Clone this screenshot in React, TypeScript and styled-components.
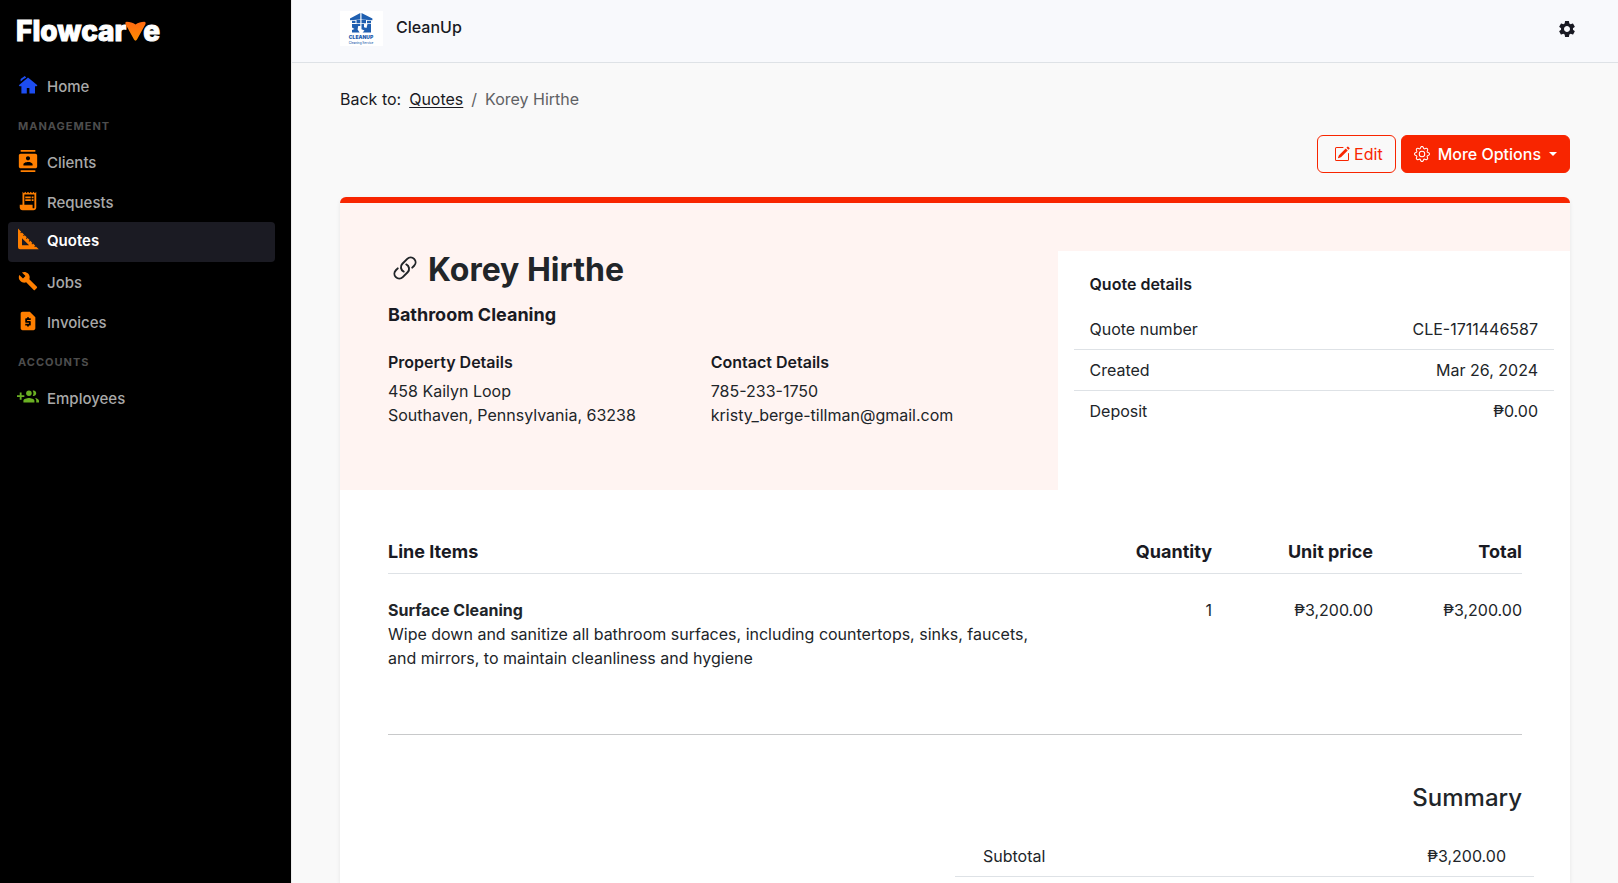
import React from 'react';
import styled, { createGlobalStyle } from 'styled-components';
import { MdContacts, MdReceiptLong, MdBuild, MdRequestPage, MdSettings } from 'react-icons/md';
import { BsGear, BsPencilSquare } from 'react-icons/bs';

const red = '#f82500';
const ink = '#212529';
const heading = '#191a23';
const line = '#dee2e6';

const GlobalStyle = createGlobalStyle`
  *, *::before, *::after { box-sizing: border-box; }
  body {
    margin: 0;
    background: #f9f9f9;
    color: ${ink};
    font-family: Inter, "Liberation Sans", sans-serif;
    font-size: 16px;
    line-height: 24px;
  }
  h1, h2, h3, p, ul, dl, dd { margin: 0; padding: 0; }
  ul { list-style: none; }
  svg { display: block; flex: none; }
`;

const Page = styled.div`
  display: flex;
  min-height: 100vh;
`;

const Sidebar = styled.aside`
  flex: none;
  width: 292px;
  padding: 16px 16px 16px 8px;
  background: #000;
  border-right: 1px solid #ececec;
`;

const Brand = styled.a`
  display: flex;
  align-items: baseline;
  height: 50px;
  padding-left: 8px;
  color: #fff;
  font-size: 28px;
  font-weight: 800;
  line-height: 30px;
  text-decoration: none;
  -webkit-text-stroke: 1px #fff;
`;

const BrandMark = styled.svg`
  width: 21px;
  height: 20px;
  margin: 0 -3px 0 -1px;
`;

const NavLink = styled.a<{ $active?: boolean }>`
  display: flex;
  align-items: center;
  gap: 8px;
  height: 40px;
  padding: ${(p) => (p.$active ? '0 9px 2px' : '2px 9px 0')};
  border-radius: 4px;
  background: ${(p) => (p.$active ? '#1b1b23' : 'transparent')};
  color: ${(p) => (p.$active ? '#fff' : '#a9a9a9')};
  font-weight: ${(p) => (p.$active ? 600 : 500)};
  font-size: 15px;
  text-decoration: none;
`;

const NavIcon = styled.span<{ $color: string }>`
  display: flex;
  align-items: center;
  justify-content: center;
  width: 22px;
  margin-bottom: 4px;
  color: ${(p) => p.$color};
`;

const NavSection = styled.h2`
  height: 36px;
  padding: 0 10px;
  color: #4d4d4d;
  font-size: 11px;
  font-weight: 700;
  letter-spacing: 1px;
  line-height: 40px;
  text-transform: uppercase;
`;

const Main = styled.div`
  display: flex;
  flex: 1;
  flex-direction: column;
  min-width: 0;
`;

const TopBar = styled.header`
  display: flex;
  align-items: flex-start;
  justify-content: space-between;
  height: 63px;
  padding: 11px 41px 0 48px;
  background: #f8f9fc;
  border-bottom: 1px solid ${line};
`;

const Company = styled.a`
  display: flex;
  align-items: flex-start;
  gap: 13px;
  color: ${heading};
  font-weight: 500;
  line-height: 32px;
  text-decoration: none;
`;

const IconButton = styled.button`
  margin-top: 8px;
  padding: 0;
  border: 0;
  background: none;
  color: ${heading};
`;

const Content = styled.main`
  display: flex;
  flex: 1;
  flex-direction: column;
  gap: 24px;
  padding: 24px 48px 0;
`;

const Breadcrumb = styled.nav`
  display: flex;
  gap: 8px;
  color: #5f6164;
`;

const Lead = styled.span`
  color: ${heading};
`;

const CrumbLink = styled.a`
  color: ${heading};
  text-underline-offset: 2px;
`;

const Actions = styled.div`
  display: flex;
  justify-content: flex-end;
  gap: 5px;
`;

const ActionButton = styled.button<{ $solid?: boolean }>`
  display: flex;
  align-items: center;
  gap: ${(p) => (p.$solid ? 8 : 4)}px;
  height: 38px;
  padding: 0 12px 0 ${(p) => (p.$solid ? 12 : 16)}px;
  border: 1px solid ${red};
  border-radius: 6px;
  background: ${(p) => (p.$solid ? red : 'transparent')};
  color: ${(p) => (p.$solid ? '#fff' : red)};
  font: ${(p) => (p.$solid ? 500 : 400)} 16px/24px Inter, "Liberation Sans", sans-serif;
`;

const Caret = styled.span`
  border: 4px solid transparent;
  border-top-color: currentColor;
  border-bottom: 0;
`;

const Card = styled.article`
  flex: 1;
  overflow: hidden;
  border-top: 6px solid ${red};
  border-radius: 6px 6px 0 0;
  background: #fff;
  box-shadow: 0 2px 4px rgba(0, 0, 0, 0.08);
`;

const Overview = styled.section`
  display: grid;
  grid-template-columns: 7fr 5fr;
  min-height: 287px;
  padding-top: 48px;
  background: #fff4f2;
`;

const Customer = styled.div`
  padding: 0 24px 0 48px;
`;

const Name = styled.h1`
  display: flex;
  align-items: center;
  gap: 10px;
  margin-bottom: 14px;
  padding-left: 4px;
  font-size: 32px;
  font-weight: 700;
  line-height: 38px;
`;

const LinkMark = styled.svg`
  width: 26px;
  height: 26px;
  margin-bottom: 4px;
`;

const Subject = styled.h2`
  margin-bottom: 22px;
  color: ${heading};
  font-size: 18px;
  font-weight: 700;
  line-height: 24px;
`;

const Columns = styled.div`
  display: grid;
  grid-template-columns: 1fr 1fr;
`;

const Label = styled.h3`
  margin-bottom: 4px;
  color: ${heading};
  font-size: 16px;
  font-weight: 600;
  line-height: 26px;
`;

const Details = styled.div`
  padding: 20px 16px;
  background: #fff;
`;

const DetailsTitle = styled(Label)`
  margin-bottom: 12px;
  padding: 0 16px;
`;

const Row = styled.div<{ $inset: number; $ruled?: boolean }>`
  display: flex;
  justify-content: space-between;
  padding: 8px ${(p) => p.$inset}px;
  border-bottom: ${(p) => (p.$ruled ? `1px solid ${line}` : '0')};
`;

const Items = styled.section`
  padding: 48px 48px 0;
`;

const Table = styled.table`
  width: 100%;
  border-collapse: collapse;
  table-layout: fixed;
`;

const HeadCell = styled.th<{ $width?: number }>`
  width: ${(p) => (p.$width ? `${p.$width}px` : 'auto')};
  padding: 0 0 8px;
  border-bottom: 1px solid ${line};
  color: ${heading};
  font-size: 18px;
  font-weight: 700;
  line-height: 27px;
  text-align: ${(p) => (p.$width ? 'right' : 'left')};
`;

const Cell = styled.td<{ $number?: boolean }>`
  padding: 24px 0 64px;
  text-align: ${(p) => (p.$number ? 'right' : 'left')};
  vertical-align: top;
`;

const Divider = styled.hr`
  height: 1px;
  margin: 0;
  border: 0;
  background: #c8c9ca;
`;

const Summary = styled.section`
  padding: 48px 36px 0;
`;

const SummaryTitle = styled.h2`
  margin-bottom: 24px;
  padding-right: 12px;
  font-size: 24px;
  font-weight: 500;
  line-height: 29px;
  text-align: right;
`;

const Totals = styled.dl`
  width: 50%;
  margin-left: auto;
`;

function HomeIcon() {
  return (
    <svg width="20" height="20" viewBox="0 0 20 20" fill="currentColor" aria-hidden="true">
      <path d="M10 2.600 19.400 10.200 18.600 11.200H17V18.600H11.400V13H8.800V18.600H3.400V11.200H1.600L.8 10.200Z" />
      <path d="M2.600 6.200V4L6.800 1 8.200 2.400 5 4.400 2.900 6.600Z" />
    </svg>
  );
}

function SetSquareIcon() {
  return (
    <svg width="22" height="22" viewBox="0 0 22 22" fill="currentColor" aria-hidden="true">
      <path
        fillRule="evenodd"
        d="M1 .5 4.2 3.7 3.3 4.6 4 5.3 4.9 4.4 7 6.5 6.1 7.4 6.8 8.1 7.7 7.2 9.8 9.3 8.9 10.2 9.6 10.9 10.5 10 12.6 12.1 11.7 13 12.4 13.7 13.3 12.8 15.4 14.9 14.5 15.8 15.2 16.5 16.1 15.6 18.2 17.7 17.3 18.6 18 19.3 18.9 18.4 21.8 21.3H3A2 2 0 0 1 1 19.3ZM5 10.2V17.3H12.1Z"
      />
    </svg>
  );
}

function AddGroupIcon() {
  return (
    <svg width="22" height="22" viewBox="0 0 24 24" fill="currentColor" aria-hidden="true">
      <path d="M8 10H5V7H3v3H0v2h3v3h2v-3h3v-2z" />
      <path d="M18 11c1.66 0 2.99-1.34 2.99-3S19.66 5 18 5c-.32 0-.63.05-.91.14.57.81.9 1.79.9 2.86s-.34 2.04-.9 2.86c.28.09.59.14.91.14z" />
      <circle cx="13" cy="8" r="3" />
      <path d="M19.62 13.16c.83.73 1.38 1.66 1.38 2.84v2h3v-2c0-1.54-2.37-2.49-4.38-2.84zM13 13c-2 0-6 1-6 3v2h12v-2c0-2-4-3-6-3z" />
    </svg>
  );
}

function CompanyLogo() {
  return (
    <svg width="43" height="35" viewBox="0 0 43 35" role="img" aria-label="CleanUp Cleaning Service">
      <rect width="43" height="35" fill="#fff" />
      <g fill="#1f5fb0">
        <path d="M20.3 2V8.4L10 9.3V7.6ZM21.500 2 32.4 7.6V9.3L21.500 8.4Z" />
        <path d="M12 9.8H15.5V12H12ZM16.500 9H20.3V12.2H16.500ZM21.500 9H26V12.2H21.500ZM27 9.8H31V12.2H27Z" />
        <path d="M12 13H20.3V15H18.2L17.600 18.500 19.600 21.5H12V19L14.500 18 12 16.500ZM21.500 13H24V16.200L26.500 17 27.500 13H31V21.6H22.600L24.500 19.4 21.500 18.2Z" />
      </g>
      <text x="21" y="28" textAnchor="middle" fontFamily="Inter, sans-serif" fontWeight="900" fontSize="5" fill="#1f5fb0">
        CLEANUP
      </text>
      <text x="21" y="33" textAnchor="middle" fontFamily="Inter, sans-serif" fontSize="3" fill="#1f5fb0">
        Cleaning Service
      </text>
    </svg>
  );
}

const orange = '#ff7f00';

export default function App() {
  return (
    <>
      <GlobalStyle />
      <Page>
        <Sidebar>
          <Brand href="#">
            <span>Flowcar</span>
            <BrandMark viewBox="0 0 21 20" aria-label="v">
              <defs>
                <linearGradient id="mark" x1="0" y1="0" x2="0" y2="1">
                  <stop offset="0" stopColor="#ff6a13" />
                  <stop offset="1" stopColor="#ff8c00" />
                </linearGradient>
              </defs>
              <path
                fill="url(#mark)"
                d="M1.8.8C4.8.8 8 2 10.5 3.4 13 2 16.2.8 19.2.8 20.6.8 21 2 20.3 3.5L12 18.6C11.2 20 9.8 20 9 18.6L.7 3.5C0 2 .4.8 1.8.8Z"
              />
            </BrandMark>
            <span>e</span>
          </Brand>
          <nav>
            <NavLink href="#">
              <NavIcon $color="#1d4df0"><HomeIcon /></NavIcon>Home
            </NavLink>
            <NavSection>Management</NavSection>
            <NavLink href="#">
              <NavIcon $color={orange}><MdContacts size={22} /></NavIcon>Clients
            </NavLink>
            <NavLink href="#">
              <NavIcon $color={orange}><MdReceiptLong size={22} /></NavIcon>Requests
            </NavLink>
            <NavLink href="#" $active aria-current="page">
              <NavIcon $color={orange}><SetSquareIcon /></NavIcon>Quotes
            </NavLink>
            <NavLink href="#">
              <NavIcon $color={orange}><MdBuild size={20} /></NavIcon>Jobs
            </NavLink>
            <NavLink href="#">
              <NavIcon $color={orange}><MdRequestPage size={22} /></NavIcon>Invoices
            </NavLink>
            <NavSection>Accounts</NavSection>
            <NavLink href="#">
              <NavIcon $color="#6ab023"><AddGroupIcon /></NavIcon>Employees
            </NavLink>
          </nav>
        </Sidebar>
        <Main>
          <TopBar>
            <Company href="#"><CompanyLogo />CleanUp</Company>
            <IconButton type="button" aria-label="Settings"><MdSettings size={20} /></IconButton>
          </TopBar>
          <Content>
            <Breadcrumb aria-label="Breadcrumb">
              <Lead>Back to:</Lead>
              <CrumbLink href="#">Quotes</CrumbLink>
              <span>/</span>
              <span>Korey Hirthe</span>
            </Breadcrumb>
            <Actions>
              <ActionButton type="button"><BsPencilSquare size={16} />Edit</ActionButton>
              <ActionButton type="button" $solid><BsGear size={16} />More Options<Caret /></ActionButton>
            </Actions>
            <Card>
              <Overview>
                <Customer>
                  <Name>
                    <LinkMark viewBox="0 0 24 24" fill="none" stroke="currentColor" strokeWidth="1.8" strokeLinecap="round" strokeLinejoin="round" aria-hidden="true">
                      <path d="M13.19 8.688a4.5 4.5 0 0 1 1.242 7.244l-4.5 4.5a4.5 4.5 0 0 1-6.364-6.364l1.757-1.757m13.35-.622 1.757-1.757a4.5 4.5 0 0 0-6.364-6.364l-4.5 4.5a4.5 4.5 0 0 0 1.242 7.244" />
                    </LinkMark>
                    Korey Hirthe
                  </Name>
                  <Subject>Bathroom Cleaning</Subject>
                  <Columns>
                    <div>
                      <Label>Property Details</Label>
                      <p>458 Kailyn Loop</p>
                      <p>Southaven, Pennsylvania, 63238</p>
                    </div>
                    <div>
                      <Label>Contact Details</Label>
                      <p>785-233-1750</p>
                      <p>kristy_berge-tillman@gmail.com</p>
                    </div>
                  </Columns>
                </Customer>
                <Details>
                  <DetailsTitle>Quote details</DetailsTitle>
                  <dl>
                    <Row $inset={16} $ruled><dt>Quote number</dt><dd>CLE-1711446587</dd></Row>
                    <Row $inset={16} $ruled><dt>Created</dt><dd>Mar 26, 2024</dd></Row>
                    <Row $inset={16}><dt>Deposit</dt><dd>₱0.00</dd></Row>
                  </dl>
                </Details>
              </Overview>
              <Items>
                <Table>
                  <thead>
                    <tr>
                      <HeadCell>Line Items</HeadCell>
                      <HeadCell $width={166}>Quantity</HeadCell>
                      <HeadCell $width={161}>Unit price</HeadCell>
                      <HeadCell $width={149}>Total</HeadCell>
                    </tr>
                  </thead>
                  <tbody>
                    <tr>
                      <Cell>
                        <strong>Surface Cleaning</strong>
                        <p>
                          Wipe down and sanitize all bathroom surfaces, including countertops, sinks, faucets, and
                          mirrors, to maintain cleanliness and hygiene
                        </p>
                      </Cell>
                      <Cell $number>1</Cell>
                      <Cell $number>₱3,200.00</Cell>
                      <Cell $number>₱3,200.00</Cell>
                    </tr>
                  </tbody>
                </Table>
                <Divider />
              </Items>
              <Summary>
                <SummaryTitle>Summary</SummaryTitle>
                <Totals>
                  <Row $inset={28} $ruled><dt>Subtotal</dt><dd>₱3,200.00</dd></Row>
                </Totals>
              </Summary>
            </Card>
          </Content>
        </Main>
      </Page>
    </>
  );
}
